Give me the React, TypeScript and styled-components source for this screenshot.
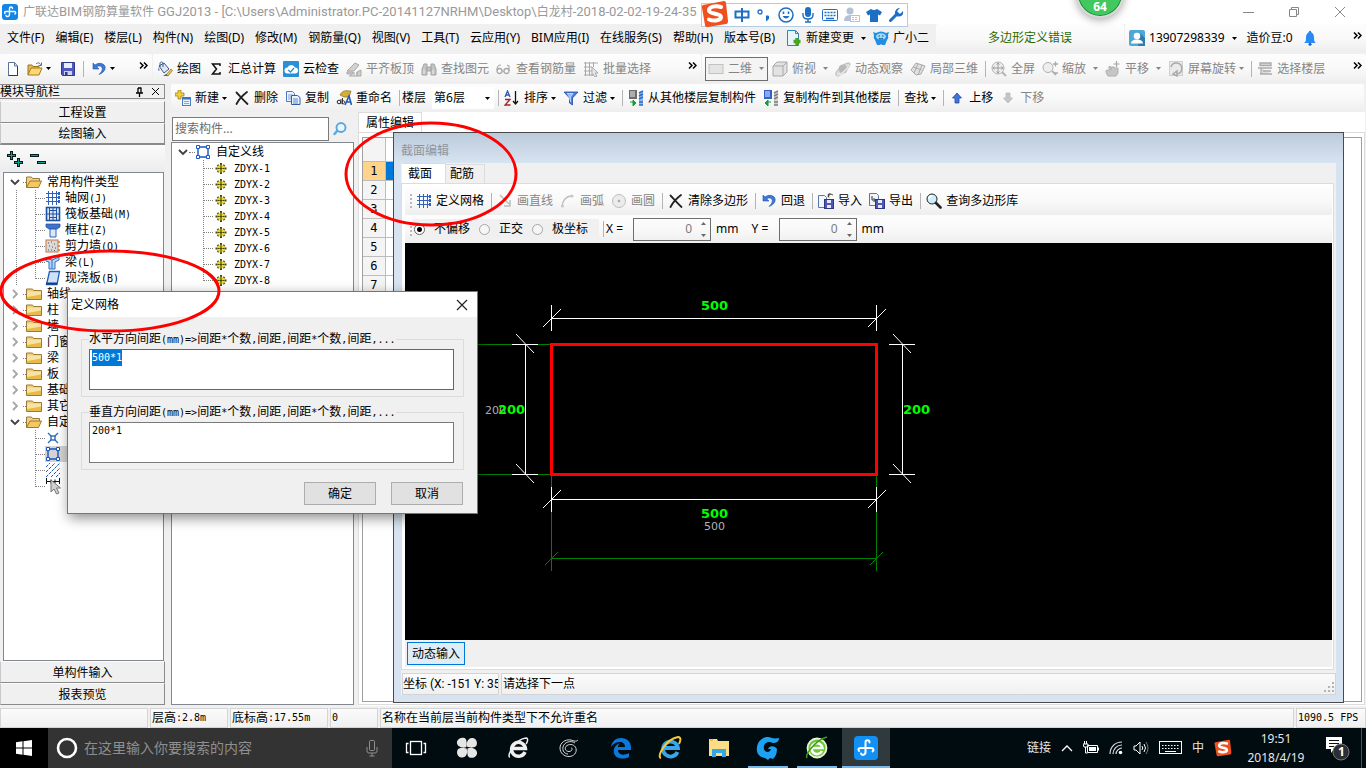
import React, { useEffect, useRef } from 'react';
import styled, { createGlobalStyle, css } from 'styled-components';

const UI = '"Noto Sans", "Noto Sans CJK SC", sans-serif';
const MONO = '"DejaVu Sans Mono", "Noto Sans CJK SC", monospace';
const NARROW = 'Roboto, "Noto Sans CJK SC", sans-serif';

const GlobalStyle = createGlobalStyle`
  * { box-sizing: border-box; }
  body { margin: 0; background: #f0f0f0; color: #000; font: 12px/16px ${UI}; }
  button, input, select, textarea { font: inherit; color: inherit; margin: 0; }
  ul { list-style: none; margin: 0; padding: 0; }
`;

/* ---------- shared ---------- */

const Screen = styled.div`
  position: relative;
  min-height: 100vh;
  display: flex;
  flex-direction: column;
  overflow: hidden;
`;

const Latin = styled.span`
  font-family: ${MONO};
  font-size: 10px;
`;

/* Half-width runs are set in the narrow monospaced face, as in the song-style labels. */
const Song = ({ children }: { children: string }) => (
  <>
    {children.split(/([\x20-\x7e]+)/).filter(Boolean).map((run, i) =>
      /^[\x20-\x7e]/.test(run) ? <Latin key={i}>{run}</Latin> : run,
    )}
  </>
);

const barFill = css`
  background: linear-gradient(#fdfdfd, #f9f9f9 50%, #eeeeee);
  border-radius: 2px;
`;

const Svg = ({ children, w = 16, h = 16 }: { children: React.ReactNode; w?: number; h?: number }) => (
  <svg width={w} height={h} viewBox={`0 0 ${w} ${h}`} fill="none" aria-hidden="true">
    {children}
  </svg>
);

const Caret = () => (
  <Svg w={5} h={3}>
    <path d="M0 0h5L2.500 3z" fill="currentColor" />
  </Svg>
);

const More = styled.span`
  margin-left: auto;
  align-self: flex-start;
  padding: 3px 4px 0 0;
`;
const MoreMark = () => (
  <More>
    <Svg w={9} h={7}>
      <path d="M1 .5l3 3-3 3M5 .5l3 3-3 3" stroke="#000" strokeWidth="1.500" />
    </Svg>
  </More>
);

const Tool = styled.button<{ $off?: boolean; $boxed?: boolean }>`
  display: flex;
  align-items: center;
  gap: 4px;
  height: 24px;
  padding: 0 3px 0 4px;
  border: 0;
  background: none;
  white-space: nowrap;
  color: ${(p) => (p.$off ? '#858585' : '#000')};
  svg { flex: none; display: block; }
  ${(p) => p.$boxed && css`
    margin-left: 3px;
    padding: 0 3px 0 2px;
    border: 1px solid #6e6e6e;
    background: #f4f4f4;
  `}
`;
const CaretSlot = styled.span<{ $wide?: boolean }>`
  width: ${(p) => (p.$wide ? 12 : 8)}px;
  margin-left: -4px;
  display: flex;
  justify-content: flex-end;
`;
const Sep = styled.span`
  width: 1px;
  height: 16px;
  margin: 0 1px 0 4px;
  background: #b4b4b4;
`;

type BtnProps = { icon?: React.ReactNode; label: string; off?: boolean; drop?: 'near' | 'wide'; boxed?: boolean };
const ToolButton = ({ icon, label, off, drop, boxed }: BtnProps) => (
  <Tool $off={off} $boxed={boxed}>
    {icon}
    {label}
    {drop && <CaretSlot $wide={drop === 'wide'}><Caret /></CaretSlot>}
  </Tool>
);

/* ---------- icons ---------- */

const G = '#a9a9a9';
const I = {
  app: (
    <Svg>
      <rect width="16" height="16" rx="3" fill="#1286e8" />
      <path d="M10.500 4.500c0-2-3-2-3 0v6c0 2.500-3 2.500-3.500 1M3 9.500C2 8 3 7.500 4 7.500h8c2 0 2 1.500 1 2.500" stroke="#fff" strokeWidth="1.400" strokeLinecap="round" />
    </Svg>
  ),
  file: <Svg><path d="M3.500 1.500h6l3 3.500v9.500h-9z" fill="#fdfeff" stroke="#5b7493" /><path d="M9.500 1.500V5h3" stroke="#5b7493" /><path d="M12.500 5.500v9h-9" stroke="#243c5c" /></Svg>,
  open: <Svg><path d="M1 14V4h4l1 1.500h6V7" fill="#e8bb57" stroke="#9b7420" /><path d="M1 14L4 7h11l-3 7z" fill="#ffd872" stroke="#a87b1e" /><path d="M9 3c2-2 4-1 5 1M14.500 1.500v3h-3" stroke="#54719b" /></Svg>,
  save: <Svg><path d="M1.500 1.500h13v13h-12l-1-1z" fill="#4f57c0" stroke="#30378e" /><path d="M4 2h8v5H4z" fill="#e9eefb" /><path d="M4 10h8v4H4z" fill="#cfd3e4" /><path d="M5 11h2.500v3H5z" fill="#30378e" /></Svg>,
  undo: <Svg><path d="M2 2v6h6L5.800 6c2-2 5.500-1 5.500 1.800 0 2-1.300 3.700-3.300 5.700 4-1.500 6.200-4 6.200-6.800C14.200 2.500 8 .8 4 4z" fill="#3f78d8" stroke="#2355ad" strokeWidth=".6" /></Svg>,
  paint: <Svg><path d="M2 5l5-3 5 6-5 4z" fill="#dfe7f2" stroke="#3c5a86" /><path d="M3 6V2.500C3 .5 6 .5 6 2.500V6" stroke="#3c5a86" /><path d="M2 6l-1 3 1.500 1z" fill="#2d67c6" /><path d="M9 14l5-6 1.500 1.500L11 15z" fill="#eec34e" stroke="#8a6a1c" strokeWidth=".7" /><path d="M6 15l3-2 2 2z" fill="#2d67c6" /></Svg>,
  sigma: <Svg><path d="M12 5V3H4.500l4 5-4 5H12v-2" stroke="#111" strokeWidth="1.500" /></Svg>,
  cloud: <Svg><rect width="16" height="16" rx="1" fill="#2a8fd3" /><path d="M4.500 12.500a3 3 0 0 1 0-6 4 4 0 0 1 7.500 0 3 3 0 0 1 0 6z" fill="#fff" /><path d="M5 9l2.500 2L11 7" stroke="#2a8fd3" strokeWidth="1.300" /></Svg>,
  slab: <Svg><path d="M1 10l8-8 4 2-5 6z" fill="#d2d2d2" stroke={G} /><path d="M1 11h6v2H1zM3 15h12V9l-4 2v4" fill="#cfcfcf" stroke={G} /><path d="M5 15v-2M8 15v-4M11 15v-4" stroke={G} /></Svg>,
  bino: <Svg><path d="M1 14V8l2-5h3v11zM10 14V3h3l2 5v6zM6 6h4v4H6z" fill="#c4c4c4" stroke="#a5a5a5" /><path d="M3 9v4M12 9v4" stroke="#eee" /></Svg>,
  glasses: <Svg><circle cx="3.500" cy="10" r="2.500" stroke={G} strokeWidth="1.300" /><circle cx="10.500" cy="10" r="2.500" stroke={G} strokeWidth="1.300" /><path d="M6 10h2M1 9c0-4 2-5 4-5M13 10V5l-2-1" stroke={G} strokeWidth="1.200" /></Svg>,
  batch: <Svg><path d="M1 2h14M1 6h8M1 10h8M1 14h8M2.500 1v14M6.500 1v14M10.500 1v5" stroke={G} /><path d="M9 6l6 6h-3l2 3-2 1-2-3-1 2z" fill="#e8e8e8" stroke={G} /></Svg>,
  flat: <Svg><rect x="1" y="3.500" width="14" height="9" fill="#e4e4e4" stroke="#c2c2c2" /></Svg>,
  cube: <Svg><path d="M1 5l4-4h10v10l-4 4H1zM1 5h10v10M11 5l4-4" fill="#e2e2e2" stroke={G} /></Svg>,
  orbit: <Svg><path d="M1 14c-1-2 2-6 6-9s8-4 8-2-3 6-7 9-6 4-7 2z" fill="#dedede" stroke="#b4b4b4" /><circle cx="8" cy="8" r="4.500" fill="#b9b9b9" /><path d="M2 14c4 0 10-5 12-10" stroke="#e8e8e8" strokeWidth="1.500" /></Svg>,
  part3d: <Svg><path d="M1 9l5-7 9 3-4 8-5 1z" fill="#e2e2e2" stroke={G} /><path d="M3.500 6l8 3M8 3l-4 9M12 4l-4 10" stroke={G} /></Svg>,
  full: <Svg><circle cx="7" cy="7" r="6" fill="#eee" stroke="#b0b0b0" /><path d="M7 2v10M2 7h10M5.500 3.500L7 2l1.500 1.500M5.500 10.500L7 12l1.500-1.500M3.500 5.500L2 7l1.500 1.500M10.500 5.500L12 7l-1.500 1.500" stroke="#9c9c9c" /><path d="M11 11l4 4" stroke="#b5b5b5" strokeWidth="2" /></Svg>,
  zoom: <Svg><circle cx="6" cy="6.500" r="5" fill="#eee" stroke="#b0b0b0" /><path d="M10 10l4 4" stroke="#b5b5b5" strokeWidth="2" /><path d="M11 3h5M13.500 .5v5M12 12h4" stroke="#aaa" strokeWidth="1.300" /></Svg>,
  hand: <Svg><path d="M3 15c-2-3-3-6-1-6l2 1V5.500h2V9l1-3h2l1 1h3v5l-2 3z" fill="#c6c6c6" stroke="#b0b0b0" /><path d="M11.500 0v6M8.500 3h6" stroke="#a5a5a5" strokeWidth="1.200" /></Svg>,
  rotate: <Svg><rect x="1.500" y=".5" width="13" height="14" fill="#eaeaea" stroke="#d0d0d0" /><path d="M3 6a5.500 5.500 0 1 1 6 7M9 10v5l-4-2z" stroke="#a9a9a9" strokeWidth="1.500" /></Svg>,
  floors: <Svg><path d="M3 2h11v2.500H3zM1 7h14M4 7v6h11M6 10h8M3 13h12" fill="#ddd" stroke="#aaa" strokeWidth="1.300" /></Svg>,
  newItem: <Svg><path d="M3 0h3v3h3v3H6v3H3V6H0V3h3z" fill="#f2cf3d" stroke="#96750f" strokeWidth=".7" /><rect x="7.500" y="7.500" width="8" height="8" fill="#eaf2fc" stroke="#4b7dc4" /><path d="M8 8.500h7" stroke="#3a70c4" strokeWidth="2" /><path d="M9 11.500h5M9 13.500h5" stroke="#88a9d8" /></Svg>,
  cross: <Svg><path d="M2.500 2.500c3 3 6 7 11 11.500M13 2C9 5 5 9 2.500 14" stroke="#222" strokeWidth="1.800" strokeLinecap="round" /></Svg>,
  copy: <Svg><path d="M1.500 1.500h6l2 2v8h-8z" fill="#edf3fc" stroke="#4d7bbd" /><path d="M3 5h5M3 7h5M3 9h5" stroke="#7fa3d8" /><path d="M6.500 5.500h6l2.500 2v7H6.500z" fill="#edf3fc" stroke="#2f5ea6" /><path d="M8 9h5M8 11h5M8 13h5" stroke="#5a87c9" /></Svg>,
  rename: <Svg><path d="M4 5c3-6 8-4 11-4l-2 6H8z" fill="#d9ad32" stroke="#8a6a1c" strokeWidth=".7" /><circle cx="3" cy="12" r="1.800" stroke="#222" /><path d="M5 9v5M6.500 8v6M6.500 11c3-1 3 3 0 3" stroke="#222" strokeWidth=".9" /><path d="M9 15l4-9 2.500 9M10.500 12h4" stroke="#2458b4" strokeWidth="1.600" /></Svg>,
  sort: <Svg><path d="M1 7l2.500-6L6 7M2 5h3" stroke="#2e59ae" strokeWidth="1.300" /><path d="M1 9.500h5L1 15h5.500" stroke="#a32525" strokeWidth="1.300" /><path d="M11.500 1v13M9 11l2.500 3L14 11" stroke="#111" strokeWidth="1.300" /></Svg>,
  filter: <Svg><path d="M1 2h14l-5.500 6v7l-3-2V8z" fill="#4b7fe0" stroke="#1f4ba5" strokeWidth=".8" /><path d="M4 3.500h6L7.500 7v5" fill="#9dbdf5" stroke="#bcd3fa" /></Svg>,
  fromFloor: <Svg><path d="M1 0h8v9H1z" fill="#6d6d6d" /><path d="M2 2h5M2 4h5M2 6h5" stroke="#eee" /><path d="M11 3l4-2v14h-4z" fill="#8fb7ee" /><path d="M11 3l4-2M11 6l4-2M11 9l4-2M11 12h4M11 15h4" stroke="#2f6cca" strokeWidth="1.500" /><path d="M2 12h3M5 10l3 3-3 3z" fill="#1a9b3c" stroke="#1a9b3c" /></Svg>,
  toFloor: <Svg><path d="M1 0h8v9H1z" fill="#3461c8" /><path d="M2 2h5M2 4h5M2 6h5" stroke="#e7efff" /><path d="M11 3l4-2v14h-4z" fill="#d2d2d2" /><path d="M11 3l4-2M11 6l4-2M11 9l4-2M11 12h4M11 15h4" stroke="#7e7e7e" strokeWidth="1.500" /><path d="M8 12H5M5 10l-3 3 3 3z" fill="#1a9b3c" stroke="#1a9b3c" /></Svg>,
  up: <Svg><path d="M8 3l4.500 5H10v5H6V8H3.500z" fill="#4272dc" stroke="#2149a0" strokeWidth=".8" /></Svg>,
  down: <Svg><path d="M8 13L3.500 8H6V3h4v5h2.500z" fill="#c6c6c6" stroke="#b5b5b5" strokeWidth=".8" /></Svg>,
  grid: <Svg><path d="M1 3.500h14M1 7.500h14M1 11.500h14M3.500 1v14M7.500 1v14M11.500 1v14" stroke="#2f62b8" /><path d="M14 2v3M14 6v3M14 10v3" stroke="#2f62b8" strokeWidth="2" /></Svg>,
  lineTool: <Svg><path d="M3 2l9 9M13 7v6H7" stroke="#bdbdbd" strokeWidth="1.500" /></Svg>,
  arcTool: <Svg><path d="M2 14c0-6 4-11 10-11" stroke="#bdbdbd" strokeWidth="1.300" /><circle cx="2.500" cy="13" r="1.500" fill="#c8c8c8" /><circle cx="12" cy="3" r="1.500" fill="#c8c8c8" /></Svg>,
  circleTool: <Svg><circle cx="8" cy="8" r="6.500" fill="#ececec" stroke="#bdbdbd" /><circle cx="8" cy="8" r="1.300" fill="#aaa" /></Svg>,
  importFile: <Svg><path d="M.5 2.500h6l2 2v10h-8z" fill="#f2f6fc" stroke="#5677a8" /><rect x="6.500" y="6.500" width="9" height="9" fill="#4f57b8" stroke="#2f357e" /><path d="M9 7h4v3H9zM9 12h4v3H9z" fill="#e6e9f6" /><path d="M10 4c1-3 3-3 5-2M12.500 .5L10 1.500l1 3" stroke="#333" /></Svg>,
  exportFile: <Svg><path d="M.5 .5h7l2 2v10h-9z" fill="#f2f6fc" stroke="#5677a8" /><rect x="6.500" y="6.500" width="9" height="9" fill="#4f57b8" stroke="#2f357e" /><path d="M9 7h4v3H9zM9 12h4v3H9z" fill="#e6e9f6" /><path d="M3 3v4h3M4.500 5L6.500 7l-2 2" stroke="#333" /></Svg>,
  lens: <Svg><circle cx="6" cy="6" r="5" fill="#cdeefa" stroke="#222" /><path d="M3 6q0-3 3-3" stroke="#fff" strokeWidth="1.500" /><path d="M10 10l4.500 4.500" stroke="#222" strokeWidth="2.600" strokeLinecap="round" /></Svg>,
  searchBlue: <Svg><path d="M5.500 9.500L2.500 13" stroke="#5aa7de" strokeWidth="2.400" strokeLinecap="round" /><circle cx="9" cy="6.500" r="4.500" fill="#eaf6fe" stroke="#5aa7de" strokeWidth="1.900" /></Svg>,
  changeFile: <Svg><path d="M1.500 .5h8l3 3v12h-11z" fill="#e9f5fc" stroke="#2b86bd" /><path d="M9.500 .5v3h3" stroke="#2b86bd" /><path d="M11 8v7M7.500 11.500h7" stroke="#4aa51d" strokeWidth="3.400" /></Svg>,
  robot: <Svg><path d="M0 2l3 1q5-3 10 0l3-1-1 3q1 3-1 5l-2 5h-3l-1-1-1 1H4L2 10Q0 8 1 5z" fill="#1f8fe6" /><ellipse cx="8" cy="6.500" rx="5" ry="3.200" fill="#9fd9fa" /><path d="M5.500 6h1.500M9 6h1.500M6 8.500q2 1 4 0" stroke="#114f8c" strokeWidth="1.200" /></Svg>,
  user: <Svg><rect width="16" height="16" rx="2" fill="#4fa6d8" /><path d="M9 16h7V8l-5-5z" fill="#2c7cae" /><circle cx="8" cy="6" r="3.300" fill="#fff" /><path d="M2 13.500c0-5.500 12-5.500 12 0z" fill="#fff" /></Svg>,
  bell: <Svg><path d="M2 13c2-1 2-3 2-6 0-3 2-5 4-5s4 2 4 5c0 3 0 5 2 6z" fill="#2a8af5" /><circle cx="8" cy="14.200" r="1.500" fill="#1565c6" /><circle cx="8" cy="2" r="1.200" fill="#2a8af5" /></Svg>,
  folder: <Svg><path d="M.5 3h6l1 1.500h8v9H.5z" fill="#f2cf74" stroke="#9b7b33" /><path d="M1 6h14v7H1z" fill="#e9b94e" /><path d="M1 5.500h14v3L1 11z" fill="#f9e3a2" /></Svg>,
  folderOpen: <Svg><path d="M.5 13.500V3h5l1 1.500h7V7" fill="#f0d084" stroke="#9b7b33" /><path d="M.5 13.500L4 7h11.500l-3 6.500z" fill="#f6c760" stroke="#9b7b33" /></Svg>,
  raft: <Svg><rect x="1.500" y="1.500" width="13" height="13" fill="#dce8f8" stroke="#1f52a5" strokeWidth="1.600" /><rect x="4.500" y="4.500" width="7" height="7" stroke="#1f52a5" /><path d="M2 8h12M8 2v12M4.500 2v2M11.500 2v2M4.500 12v2M11.500 12v2" stroke="#1f52a5" /></Svg>,
  column: <Svg><path d="M1 2h14v3l-3 2H4L1 5z" fill="#3c74cc" stroke="#1f4b94" strokeWidth=".7" /><path d="M5 7h6v8H5z" fill="#dbe8fb" stroke="#2f62b8" /></Svg>,
  wall: <Svg><rect x="1" y="2" width="12" height="12" fill="#d9d9d9" stroke="#c8763c" /><path d="M3 5h1M6 4h1M9 6h1M4 8h1M7 9h1M10 10h1M3 12h1M6 12h1M9 12.500h1" stroke="#555" /><path d="M13 4h2M13 8h2M13 12h2" stroke="#c8763c" strokeWidth="1.500" /></Svg>,
  beam: <Svg><path d="M1 4l6 2v9H4V8L1 7zM7 6l7-3v3l-4 2v7H7" fill="#b9d4f5" stroke="#2f72c8" /></Svg>,
  plate: <Svg><path d="M4.500 1.500h10L12 14.500H1.500z" fill="#cfe0f7" stroke="#1f5bb8" strokeWidth="1.300" /><path d="M1 13.500h11" stroke="#123f8c" strokeWidth="2" /></Svg>,
  point: <Svg><path d="M3 3l3 3M13 3l-3 3M3 13l3-3M13 13l-3-3" stroke="#2a70c0" strokeWidth="1.300" /><rect x="6" y="6" width="4" height="4" stroke="#1d5fb0" strokeWidth="1.300" /></Svg>,
  poly: <Svg><path d="M3 3h10v10H3z" stroke="#1856c0" strokeWidth="1.400" /><path d="M1.500 1.500h3v3h-3zM11.500 1.500h3v3h-3zM1.500 11.500h3v3h-3zM11.500 11.500h3v3h-3z" fill="#fff" stroke="#1856c0" /></Svg>,
  hatch: <Svg><path d="M1 5l4-4M1 10l9-9M1 15L15 1M6 15l9-9M11 15l4-4" stroke="#1856c0" strokeDasharray="3 1" /></Svg>,
  dims: <Svg><path d="M1.500 0v6M14.500 0v6M1 3.500h14M6 1.500v4M10 1.500v4" stroke="#111" /></Svg>,
  gear: <Svg w={12}><path d="M6 3v11M.5 8.500h11M2.500 5l7 7M9.500 5l-7 7" stroke="#45450a" strokeWidth="2" /><circle cx="6" cy="8.500" r="3.800" fill="#e4dc2c" /><path d="M6 5v2M6 10v2M2.500 8.500h2M7.500 8.500h2" stroke="#45450a" /><circle cx="6" cy="8.500" r="1.200" fill="#45450a" /></Svg>,
};

/* ---------- title and menu ---------- */

const TitleBar = styled.header`
  height: 24px;
  display: flex;
  align-items: center;
  gap: 5px;
  padding: 0 20px 0 2px;
  background: #fff;
  color: #999;
  white-space: nowrap;
`;
const TitleLatin = styled.span`
  font: 13px/16px ${NARROW};
`;
const WinControls = styled.div`
  margin-left: auto;
  display: flex;
  gap: 34px;
`;
const CtrlButton = styled.button`
  width: 12px;
  height: 12px;
  padding: 0;
  border: 0;
  background: none;
  svg { display: block; }
`;
const MenuBar = styled.nav`
  height: 28px;
  display: flex;
  align-items: stretch;
`;
const Menus = styled.div`
  display: flex;
  align-items: center;
  gap: 11px;
  padding: 0 7px;
`;
const MenuItem = styled.button`
  padding: 0;
  border: 0;
  background: none;
  white-space: nowrap;
`;
const MenuTools = styled.div`
  display: flex;
  align-items: center;
`;
const Notice = styled.output`
  ${barFill}
  width: 188px;
  margin-left: 4px;
  padding-top: 6px;
  text-align: center;
  color: #2d6a00;
`;
const UserBar = styled.div`
  ${barFill}
  flex: 1;
  margin-left: 1px;
  display: flex;
  align-items: center;
`;

const Toolbars = styled.div`
  display: flex;
  height: 32px;
  padding: 2px 0 1px;
  gap: 1px;
`;
const Strip = styled.div<{ $w?: number; $pad?: number }>`
  ${barFill}
  ${(p) => (p.$w ? css`width: ${p.$w}px;` : css`flex: 1;`)}
  display: flex;
  align-items: center;
  padding-left: ${(p) => p.$pad ?? 0}px;
`;
const QuickButton = styled.button`
  display: flex;
  align-items: center;
  padding: 0 3px;
  border: 0;
  background: none;
  & > svg { display: block; }
`;

/* ---------- work area ---------- */

const Work = styled.main`
  flex: 1;
  display: flex;
  gap: 6px;
  min-height: 0;
`;
const Side = styled.aside`
  width: 165px;
  flex: none;
  display: flex;
  flex-direction: column;
  padding-bottom: 1px;
`;
const SideTitle = styled.div`
  display: flex;
  align-items: center;
  height: 15px;
  margin-bottom: 2px;
  border: 1px solid #8b8b8b;
  border-left: 0;
  line-height: 13px;
  svg { display: block; margin-right: 4px; }
  & > :nth-child(2) { margin-left: auto; margin-right: 7px; }
`;
const SideButton = styled.button<{ $on?: boolean }>`
  height: 22px;
  padding: 1px 0 0;
  border: 1px solid #a0a0a0;
  border-color: #fdfdfd #8a8a8a #8a8a8a #c8c8c8;
  border-bottom-width: ${(p) => (p.$on ? 2 : 1)}px;
  background: #f0f0f0;
`;
const SideTools = styled.div`
  height: 27px;
  display: flex;
  align-items: center;
  gap: 7px;
  padding-left: 7px;
  background: linear-gradient(#fbfbfb, #ececec);
  svg { display: block; }
`;
const TreeBox = styled.div<{ $pad: number }>`
  flex: 1;
  margin-left: ${(p) => p.$pad}px;
  margin-right: 1px;
  border: 1px solid #828790;
  padding-top: 1px;
  background: #fff;
`;
const dotsV = 'repeating-linear-gradient(#808080 0 1px, transparent 1px 2px)';
const Branch = styled.ul<{ $x: number; $outer?: number }>`
  padding-left: ${(p) => p.$x}px;
  background-image: ${dotsV}${(p) => (p.$outer ? `, ${dotsV}` : '')};
  background-size: 1px calc(100% - 8px)${(p) => (p.$outer ? ', 1px 100%' : '')};
  background-position: ${(p) => p.$x}px 0${(p) => (p.$outer ? `, ${p.$outer}px 0` : '')};
  background-repeat: no-repeat;
`;
const Row = styled.div`
  display: flex;
  align-items: center;
  height: 16px;
  padding-left: 5px;
  white-space: nowrap;
  svg { display: block; flex: none; }
`;
const Leaf = styled.li`
  display: flex;
  align-items: center;
  height: 16px;
  white-space: nowrap;
  svg { display: block; flex: none; }
`;
const LeafBody = styled.span<{ $on?: boolean; $wide?: boolean }>`
  flex: 1;
  display: flex;
  align-items: center;
  gap: ${(p) => (p.$wide ? 7 : 4)}px;
  height: 16px;
  padding-left: ${(p) => (p.$wide ? 2 : 0)}px;
  background: ${(p) => (p.$on ? '#d4d4d4' : 'none')};
`;
const Dots = styled.i<{ $w: number }>`
  width: ${(p) => p.$w}px;
  flex: none;
  border-top: 1px dotted #808080;
`;
const Twist = ({ open }: { open?: boolean }) => (
  <Svg w={12} h={12}>
    <path d={open ? 'M2 4l4 4 4-4' : 'M4 2l4 4-4 4'} stroke={open ? '#404040' : '#a6a6a6'} strokeWidth="1.800" />
  </Svg>
);
const Gap = styled.i<{ $w: number }>`
  width: ${(p) => p.$w}px;
  flex: none;
`;
const Folder = ({ label, open }: { label: string; open?: boolean }) => (
  <Row>
    <Twist open={open} />
    <Gap $w={2} />
    <Dots $w={3} />
    {open ? I.folderOpen : I.folder}
    <Gap $w={5} />
    <Song>{label}</Song>
  </Row>
);
const Item = ({ icon, label, on, wide }: { icon: React.ReactNode; label?: string; on?: boolean; wide?: boolean }) => (
  <Leaf>
    <Dots $w={10} />
    <LeafBody $on={on} $wide={wide}>
      {icon}
      {label && <span><Song>{label}</Song></span>}
    </LeafBody>
  </Leaf>
);

const Right = styled.div`
  flex: 1;
  min-width: 0;
  display: flex;
  flex-direction: column;
`;
const EditTools = styled.div`
  ${barFill}
  display: flex;
  align-items: center;
  height: 28px;
  margin-right: 2px;
`;
const FloorLabel = styled.label`
  display: flex;
  align-items: center;
  gap: 6px;
  padding-left: 1px;
`;
const FloorBox = styled.span`
  display: flex;
  align-items: center;
  width: 62px;
  height: 22px;
  padding-right: 4px;
  background: #fff;
`;
const FloorSelect = styled.select`
  flex: 1;
  min-width: 0;
  height: 20px;
  padding: 0 0 0 2px;
  border: 0;
  background: none;
  appearance: none;
`;
const Panes = styled.div`
  flex: 1;
  display: flex;
  gap: 3px;
`;
const ListPane = styled.section`
  width: 184px;
  flex: none;
  display: flex;
  flex-direction: column;
  padding: 5px 0 1px;
`;
const SearchRow = styled.div`
  display: flex;
  align-items: center;
  height: 25px;
  padding: 0 0 1px 1px;
`;
const SearchInput = styled.input`
  width: 157px;
  height: 24px;
  padding: 0 2px 2px;
  border: 1px solid #7a7a7a;
  background: #fff;
  &::placeholder { color: #6d6d6d; opacity: 1; }
`;
const PropPane = styled.section`
  flex: 1;
  display: flex;
  flex-direction: column;
  margin-right: 1px;
  background: #fff;
`;
const PropTab = styled.button`
  width: 64px;
  height: 20px;
  padding: 0;
  border: 1px solid #dcdcdc;
  border-bottom: 0;
  background: #fff;
`;
const PropBody = styled.div`
  flex: 1;
  margin-bottom: 1px;
  padding: 4px 2px 2px 3px;
  border: 1px solid #dcdcdc;
  display: flex;
`;
const PropFrame = styled.div`
  flex: 1;
  border: 1px solid #a0a0a0;
`;
const PropGrid = styled.table`
  width: 90%;
  border-collapse: collapse;
  font: 12px/16px ${MONO};
  th, td { height: 19px; padding: 0; border: 0 solid #bdbdbd; border-width: 0 1px 1px 0; }
  th { width: 22px; font-weight: 400; background: #f4f4f4; }
  thead th { height: 23px; }
`;
const HotHead = styled.th`
  && { background: #ffd48a; }
`;
const HotCell = styled.td`
  background: #0078d7;
`;

/* ---------- section editor window ---------- */

const EditorWindow = styled.section`
  position: absolute;
  inset: 132px 22px 65px 393px;
  display: flex;
  flex-direction: column;
  padding: 0 7px 7px;
  border: 1px solid #4a4a4a;
  background: #d7e3f1;
`;
const EditorTitle = styled.h2`
  height: 30px;
  margin: 0 -7px;
  padding: 10px 7px 0;
  font-size: 12px;
  font-weight: 400;
  color: #8e959c;
  background: linear-gradient(#bccbdb, #d7e3f1);
`;
const Client = styled.div`
  flex: 1;
  display: flex;
  flex-direction: column;
  background: #f0f0f0;
`;
const Tabs = styled.div`
  display: flex;
  align-items: flex-end;
  height: 20px;
  padding-left: 1px;
`;
const Tab = styled.button<{ $on?: boolean }>`
  width: ${(p) => (p.$on ? 44 : 39)}px;
  height: ${(p) => (p.$on ? 21 : 19)}px;
  margin-bottom: ${(p) => (p.$on ? -1 : 0)}px;
  padding: 0 6px;
  text-align: left;
  border: 1px solid #dcdcdc;
  border-width: 1px 1px 0 0;
  background: ${(p) => (p.$on ? '#fff' : '#f0f0f0')};
  ${(p) => !p.$on && css`padding: 0 4px;`}
`;
const TabPanel = styled.div`
  flex: 1;
  display: flex;
  flex-direction: column;
  margin: 0 2px 3px 0;
  padding: 3px 1px 2px 3px;
  border: 1px solid #dcdcdc;
  background: #fff;
`;
const EditorBar = styled.div`
  ${barFill}
  height: 28px;
  display: flex;
  align-items: center;
  padding-left: 5px;
`;
const Grip = styled.i`
  width: 2px;
  height: 14px;
  background: repeating-linear-gradient(#b8b8b8 0 2px, transparent 2px 4px);
`;
const Radios = styled.div`
  display: flex;
  align-items: center;
  height: 20px;
  margin-left: 1px;
  padding: 0 11px 0 1px;
  gap: 9px;
  background: #f0f0f0;
`;
const Radio = styled.label`
  display: flex;
  align-items: center;
  gap: 9px;
`;
const RadioInput = styled.input<{ $off?: boolean }>`
  appearance: none;
  width: 11px;
  height: 11px;
  border: 1px solid ${(p) => (p.$off ? '#a6a6a6' : '#666')};
  border-radius: 50%;
  background: #f6f6f6;
  &:checked { background: radial-gradient(#000 0 2px, #fff 3px); }
`;
const Coord = styled.label<{ $first?: boolean }>`
  display: flex;
  align-items: center;
  gap: 5px;
  margin-left: ${(p) => (p.$first ? 1 : 13)}px;
`;
const CoordName = styled.span`
  width: 22px;
`;
const Spin = styled.span`
  display: flex;
  align-items: center;
  width: 78px;
  height: 23px;
  padding-right: 3px;
  border: 1px solid #6e6e6e;
  svg { display: block; }
`;
const SpinInput = styled.input`
  flex: 1;
  min-width: 0;
  height: 19px;
  padding: 0 8px 2px;
  border: 0;
  background: none;
  text-align: right;
  color: #7c7c7c;
`;
const Canvas = styled.div`
  flex: 1;
  background: #000;
  overflow: hidden;
  svg { display: block; }
`;
const CanvasFoot = styled.div`
  height: 27px;
  padding: 2px;
  background: #f0f0f0;
`;
const DynButton = styled.button`
  display: block;
  width: 58px;
  height: 23px;
  padding: 0;
  border: 1px solid #0078d7;
  background: #dfedf8;
`;
const EditorStatus = styled.footer`
  display: flex;
  gap: 2px;
  height: 22px;
  padding-left: 1px;
`;
const StatusCell = styled.span<{ $w?: number; $narrow?: boolean }>`
  ${(p) => (p.$w ? css`width: ${p.$w}px; flex: none;` : css`flex: 1;`)}
  ${(p) => p.$narrow && css`font-family: ${NARROW};`}
  display: flex;
  align-items: center;
  padding-left: ${(p) => (p.$narrow ? 0 : 1)}px;
  overflow: hidden;
  white-space: pre;
  border: 1px solid #d4d4d4;
  background: linear-gradient(#fbfbfb, #f0f0f0);
  & > svg { margin: auto 1px 1px auto; }
`;

const Drawing = () => {
  const slash = (x: number, y: number) => <path key={`${x}-${y}`} d={`M${x - 8} ${y + 9}l18-18`} />;
  const back = (x: number, y: number) => <path key={`${x}-${y}`} d={`M${x - 9} ${y - 10}l18 19`} />;
  const big = { fill: '#00ff00', fontFamily: 'DejaVu Sans, sans-serif', fontWeight: 700, fontSize: 13 };
  const small = { fill: '#b4b4b4', fontFamily: 'DejaVu Sans, sans-serif', fontSize: 11 };
  return (
    <svg width="100%" height="396" fill="none" role="img" aria-label="500 × 200">
      <g stroke="#008000">
        <path d="M40 101.500h107M40 231.500h107M146.500 232v96M471.500 232v96M146.500 315.500h325" />
        <path d="M140 322l13-13M465 322l13-13" />
      </g>
      <text x="80" y="171" {...small}>200</text>
      <text x="299" y="287" {...small}>500</text>
      <g stroke="#fff">
        <path d="M146.500 75.500h325M146.500 62v26M471.500 62v26" />
        <path d="M146.500 256.500h325M146.500 244v25M471.500 244v25" />
        <path d="M120.500 101.500v130M107 101.500h26M107 231.500h26" />
        <path d="M497.500 101.500v130M484 101.500h26M484 231.500h26" />
        {slash(146, 75)}{slash(471, 75)}{slash(146, 256)}{slash(471, 256)}
        {back(120, 101)}{back(120, 231)}{back(497, 101)}{back(497, 231)}
      </g>
      <rect x="146.500" y="101.500" width="325" height="130" stroke="#ff0000" strokeWidth="3" />
      <text x="296" y="67" {...big}>500</text>
      <text x="296" y="275" {...big}>500</text>
      <text x="93" y="171" {...big}>200</text>
      <text x="498" y="171" {...big}>200</text>
    </svg>
  );
};

const CoordField = ({ name, first }: { name: string; first?: boolean }) => (
  <Coord $first={first}>
    <CoordName>{name} =</CoordName>
    <Spin>
      <SpinInput defaultValue="0" />
      <Svg w={7} h={17}><path d="M1 4l2.500-3L6 4zM1 13l2.500 3L6 13z" fill="#6a6a6a" /></Svg>
    </Spin>
    mm
  </Coord>
);

const SectionEditor = () => (
  <EditorWindow>
    <EditorTitle>截面编辑</EditorTitle>
    <Client>
      <Tabs>
        <Tab $on>截面</Tab>
        <Tab>配筋</Tab>
      </Tabs>
      <TabPanel>
        <EditorBar>
          <Grip />
          <ToolButton icon={I.grid} label="定义网格" />
          <Sep />
          <ToolButton icon={I.lineTool} label="画直线" off />
          <ToolButton icon={I.arcTool} label="画弧" off />
          <ToolButton icon={I.circleTool} label="画圆" off />
          <Sep />
          <ToolButton icon={I.cross} label="清除多边形" />
          <Sep />
          <ToolButton icon={I.undo} label="回退" />
          <Sep />
          <ToolButton icon={I.importFile} label="导入" />
          <ToolButton icon={I.exportFile} label="导出" />
          <Sep />
          <ToolButton icon={I.lens} label="查询多边形库" />
        </EditorBar>
        <EditorBar>
          <Grip />
          <Radios>
            <Radio><RadioInput type="radio" name="mode" defaultChecked />不偏移</Radio>
            <Radio><RadioInput type="radio" name="mode" $off />正交</Radio>
            <Radio><RadioInput type="radio" name="mode" $off />极坐标</Radio>
          </Radios>
          <Sep />
          <CoordField name="X" first />
          <CoordField name="Y" />
        </EditorBar>
        <Canvas><Drawing /></Canvas>
        <CanvasFoot><DynButton>动态输入</DynButton></CanvasFoot>
      </TabPanel>
      <EditorStatus>
        <StatusCell $w={97} $narrow>坐标 (X: -151 Y: 35</StatusCell>
        <StatusCell>
          请选择下一点
          <Svg w={11} h={11}>
            <path d="M9 0h2v2H9zM9 4h2v2H9zM9 8h2v2H9zM5 4h2v2H5zM5 8h2v2H5zM1 8h2v2H1z" fill="#b4b4b4" />
          </Svg>
        </StatusCell>
      </EditorStatus>
    </Client>
  </EditorWindow>
);

/* ---------- grid dialog ---------- */

const Dialog = styled.section`
  position: absolute;
  left: 67px;
  top: 291px;
  width: 411px;
  border: 1px solid #2f86dd;
  background: #f0f0f0;
  box-shadow: 2px 4px 12px rgba(0, 0, 0, 0.45);
`;
const DialogTitle = styled.header`
  display: flex;
  align-items: center;
  justify-content: space-between;
  height: 25px;
  padding: 0 9px 0 3px;
  background: #fff;
`;
const DialogBody = styled.form`
  display: flex;
  flex-direction: column;
  gap: 7px;
  padding: 14px 13px 8px;
`;
const Field = styled.fieldset`
  height: 66px;
  margin: 0;
  padding: 1px 9px 0 7px;
  border: 1px solid #dcdcdc;
`;
const Legend = styled.legend`
  padding: 0 1px 0 0;
  white-space: nowrap;
`;
const Entry = styled.textarea<{ $focus?: boolean }>`
  display: block;
  width: 100%;
  height: 41px;
  padding: 0 2px;
  border: 1px solid ${(p) => (p.$focus ? '#3c6f9c' : '#7a7a7a')};
  outline: 0;
  resize: none;
  overflow: hidden;
  font: 10px/16px ${MONO};
  background: #fff;
  caret-color: transparent;
  &::selection { background: #0078d7; color: #fff; }
`;
const Actions = styled.div`
  display: flex;
  justify-content: flex-end;
  gap: 15px;
  padding: 5px 1px 0 0;
`;
const PushButton = styled.button`
  width: 72px;
  height: 23px;
  padding: 0;
  border: 1px solid #adadad;
  background: #e1e1e1;
`;

const GridDialog = () => {
  const first = useRef<HTMLTextAreaElement>(null);
  useEffect(() => {
    first.current?.focus({ preventScroll: true });
    first.current?.select();
  }, []);
  return (
    <Dialog role="dialog" aria-labelledby="grid-title">
      <DialogTitle>
        <span id="grid-title">定义网格</span>
        <CtrlButton aria-label="关闭">
          <Svg w={12} h={12}><path d="M1 1l10 10M11 1L1 11" stroke="#222" strokeWidth="1.200" /></Svg>
        </CtrlButton>
      </DialogTitle>
      <DialogBody onSubmit={(e) => e.preventDefault()}>
        <Field>
          <Legend id="h-gap"><Song>水平方向间距(mm)=&gt;间距*个数,间距,间距*个数,间距,...</Song></Legend>
          <Entry ref={first} $focus aria-labelledby="h-gap" defaultValue="500*1" spellCheck={false} />
        </Field>
        <Field>
          <Legend id="v-gap"><Song>垂直方向间距(mm)=&gt;间距*个数,间距,间距*个数,间距,...</Song></Legend>
          <Entry aria-labelledby="v-gap" defaultValue="200*1" spellCheck={false} />
        </Field>
        <Actions>
          <PushButton type="submit">确定</PushButton>
          <PushButton type="button">取消</PushButton>
        </Actions>
      </DialogBody>
    </Dialog>
  );
};

/* ---------- floating items ---------- */

const Marks = styled.svg`
  position: absolute;
  left: 0;
  top: 0;
  pointer-events: none;
`;
const InputBar = styled.div`
  position: absolute;
  left: 701px;
  top: 3px;
  width: 207px;
  height: 24px;
  display: flex;
  align-items: center;
  gap: 6px;
  padding-left: 32px;
  border: 1px solid #b4cbe4;
  background: #fff;
  color: #1c6fc4;
  font-weight: 700;
  svg { display: block; }
`;
const InputLogo = styled.span`
  position: absolute;
  left: -1px;
  top: -4px;
`;
const Ball = styled.div`
  position: absolute;
  left: 1076px;
  top: -30px;
  width: 48px;
  height: 48px;
  padding-top: 27px;
  border: 2px solid #d8d8d8;
  border-radius: 50%;
  background: #43c75f;
  box-shadow: inset 0 0 0 1px #168a3a, 0 2px 8px rgba(0, 0, 0, 0.35);
  color: #fff;
  font: 700 12px/16px ${UI};
  text-align: center;
`;
const SogouS = ({ size }: { size: number }) => (
  <svg width={size} height={size} viewBox="0 0 28 28" aria-hidden="true">
    <path d="M2 5L23 1q2 0 2 2l2 18q0 3-2 3L7 27q-3 0-3-2L1 8Q0 6 2 5z" fill="#f0501e" />
    <path d="M20 7C14 5 8 7 8 10.500c0 4 12 2.500 12 6.500 0 3.500-7 4.500-12 2.500" fill="none" stroke="#fff" strokeWidth="4" strokeLinecap="round" />
  </svg>
);

/* ---------- status and taskbar ---------- */

const StatusBar = styled.footer`
  display: flex;
  gap: 2px;
  height: 20px;
  margin-top: 2px;
`;
const Taskbar = styled.footer`
  display: flex;
  height: 40px;
  background: #010c10;
  color: #e6e6e6;
  svg { display: block; }
`;
const StartButton = styled.button`
  width: 48px;
  display: grid;
  place-items: center;
  padding: 0;
  border: 0;
  background: #000;
`;
const TaskSearch = styled.label`
  width: 344px;
  display: flex;
  align-items: center;
  gap: 6px;
  padding: 0 14px 0 8px;
  background: #333;
`;
const TaskInput = styled.input`
  flex: 1;
  min-width: 0;
  padding: 0;
  border: 0;
  background: none;
  font-size: 14px;
  line-height: 20px;
  &::placeholder { color: #8f8f8f; opacity: 1; }
`;
const TaskGroup = styled.div<{ $gap: number }>`
  display: flex;
  gap: ${(p) => p.$gap}px;
  margin-right: 4px;
`;
const TaskButton = styled.button<{ $state?: 'open' | 'active' }>`
  width: 48px;
  display: grid;
  place-items: center;
  padding: 0;
  border: 0;
  background: ${(p) => (p.$state === 'active' ? '#30393c' : 'none')};
  box-shadow: ${(p) => (p.$state ? 'inset 0 -2px #76b9ed' : 'none')};
  ${(p) => p.$state === 'open' && css`width: 40px; margin: 0 4px;`}
`;
const Tray = styled.div`
  margin-left: auto;
  display: flex;
  align-items: center;
  gap: 10px;
  white-space: nowrap;
`;
const Clock = styled.time`
  width: 68px;
  text-align: center;
  line-height: 19px;
  margin-right: 5px;
`;
const Notices = styled.button`
  width: 37px;
  height: 40px;
  padding: 0;
  border: 0;
  border-right: 1px solid #4a5053;
  margin-right: 4px;
  background: none;
`;

const T = {
  start: <Svg><path d="M0 2.200l6.500-.9v6.200H0zM7.500 1.200L16 0v7.500H7.500zM0 8.500h6.500v6.200L0 13.800zM7.500 8.500H16V16l-8.500-1.200z" fill="#fff" /></Svg>,
  ring: <Svg w={22} h={22}><circle cx="11" cy="11" r="9" stroke="#fff" strokeWidth="2.600" /></Svg>,
  mic: <Svg w={12} h={18}><rect x="3.500" y="1.500" width="5" height="10" rx="1" stroke="#8f8f8f" /><path d="M1 8v4q0 2 2 2h6q2 0 2-2V8M6 14v3M3.500 17h5" stroke="#8f8f8f" /></Svg>,
  view: <Svg w={22} h={16}><rect x="5.500" y="1.500" width="11" height="13" stroke="#fff" strokeWidth="1.300" /><path d="M3.500 3.500h-2v9h2M18.500 3.500h2v9h-2" stroke="#fff" strokeWidth="1.300" /></Svg>,
  flower: <Svg w={22} h={22}><g fill="#e6e6e6"><path d="M10.500 10C6 12 0 9 1 4.500 2 1 6 0 8.500 1c2 1 2.500 3 2 9zM11.500 10C9.500 6 12 0 17 1c4 1 4.500 5 3.500 7.500-1 2-4 2.500-9 1.500zM11.500 11.500c4.500-2 10.500 1 9.500 5.500-1 3.500-5 4.500-7.500 3.500-2-1-2.500-3-2-9zM10.500 11.500c2 4-.5 10-5.500 9-4-1-4.500-5-3.500-7.500 1-2 4-2.500 9-1.500z" /></g></Svg>,
  ieWhite: <Svg w={22} h={22}><path d="M18 15a7 7 0 1 1 .5-3.500H6" stroke="#f0f0f0" strokeWidth="3.400" /><path d="M3 20C-1 20 8 2 19 1c3 0 1 5 0 6" stroke="#f0f0f0" strokeWidth="1.500" /></Svg>,
  swirl: <Svg w={20} h={20}><path d="M19 2c-2 2-4 1-7 0C6 1 1 5 1 10c0 5 4 8.500 9 8.500s8-4 7-8-6-5-9-3-2 6 2 6c3 0 4-3 2-4M16 5C12 2 5 4 4 9c-1 4 2 7 5 7" stroke="#dadada" /></Svg>,
  edge: <Svg w={22} h={22}><path d="M1 10C2 4 6 1 11 1c6 0 10 4 10 9v3H8c0 5 6 6 11 3v4c-8 4-17 0-15-8 1-3 3-5 6-6-2 2-2 3-2 4h7c0-7-10-6-14 0z" fill="#0a78dc" /></Svg>,
  ie: <Svg w={24} h={24}><path d="M19.500 16a7.500 7.500 0 1 1 .5-4H7" stroke="#3aa6ea" strokeWidth="3.800" /><path d="M3 22C-2 21 8 3 20 1c4 0 2 5 1 7" stroke="#f7c832" strokeWidth="2" /></Svg>,
  explorer: <Svg w={22} h={20}><path d="M1 1h8l1 2h11v15H1z" fill="#fbdd86" /><path d="M4 19v-8h14v8h-4v-4H8v4z" fill="#35a7e2" /><path d="M2 2h3" stroke="#e99a1c" /></Svg>,
  gBlue: <Svg w={24} h={24}><path d="M23 2c0 4-3 5-6 5-6-3-10 1-9 6 1 4 6 4 7 0h-3c2-4 7-3 9 0 0 5-2 8-4 10l-3-1-2 2-3-2C3 21 0 17 1 11 2 4 9-1 16 2c3 1 5 0 7 0z" fill="#1da1f2" /></Svg>,
  green: <Svg w={24} h={24}><circle cx="12" cy="12" r="9.500" fill="#6cc832" stroke="#e8f6dd" strokeWidth="1.800" /><path d="M17 15a5.500 5.500 0 1 1 .5-3H8" stroke="#fff" strokeWidth="2.600" /><path d="M2 22C0 19 10 4 22 1" stroke="#3f9a14" strokeWidth="1.500" /></Svg>,
  ggj: <Svg w={24} h={24}><rect width="24" height="24" rx="4" fill="#1390f5" /><path d="M15.500 6.500c0-3-4-3-4 0V16c0 3.500-4 3.500-4.500 1.500M5 15c-1.500-2 0-3 2-3h10c3 0 3 2.500 1.500 3.500" stroke="#fff" strokeWidth="2" strokeLinecap="round" /></Svg>,
};

const folders = ['轴线', '柱', '墙', '门窗', '梁', '板', '基础', '其它'];

export default function App() {
  return (
    <Screen>
      <GlobalStyle />
      <TitleBar>
        {I.app}
        <span>
          广联达<TitleLatin>BIM</TitleLatin>钢筋算量软件
          <TitleLatin> GGJ2013 - [C:\Users\Administrator.PC-20141127NRHM\Desktop\</TitleLatin>
          白龙村<TitleLatin>-2018-02-02-19-24-35</TitleLatin>
        </span>
        <WinControls>
          <CtrlButton aria-label="最小化"><Svg w={12} h={12}><path d="M1 6.500h11" stroke="#888" /></Svg></CtrlButton>
          <CtrlButton aria-label="还原"><Svg w={12} h={12}><path d="M1.500 3.500h7v7h-7zM3.500 3.500v-2h7v7h-2" stroke="#888" /></Svg></CtrlButton>
          <CtrlButton aria-label="关闭"><Svg w={12} h={12}><path d="M1 1l10 10M11 1L1 11" stroke="#888" /></Svg></CtrlButton>
        </WinControls>
      </TitleBar>

      <MenuBar>
        <Menus>
          {['文件(F)', '编辑(E)', '楼层(L)', '构件(N)', '绘图(D)', '修改(M)', '钢筋量(Q)', '视图(V)', '工具(T)', '云应用(Y)', 'BIM应用(I)', '在线服务(S)', '帮助(H)', '版本号(B)'].map((m) => (
            <MenuItem key={m}>{m}</MenuItem>
          ))}
        </Menus>
        <MenuTools>
          <ToolButton icon={I.changeFile} label="新建变更" drop="wide" />
          <ToolButton icon={I.robot} label="广小二" />
        </MenuTools>
        <Notice>多边形定义错误</Notice>
        <UserBar>
          <ToolButton icon={I.user} label="13907298339" drop="wide" />
          <Gap $w={3} />
          <ToolButton label="造价豆:0" />
          <Gap $w={3} />
          <QuickButton aria-label="消息">{I.bell}</QuickButton>
          <MoreMark />
        </UserBar>
      </MenuBar>

      <Toolbars>
        <Strip $w={152} $pad={2}>
          <QuickButton aria-label="新建">{I.file}</QuickButton>
          <QuickButton aria-label="打开">{I.open}<CaretSlot $wide><Caret /></CaretSlot></QuickButton>
          <Gap $w={3} />
          <QuickButton aria-label="保存">{I.save}</QuickButton>
          <Sep />
          <Gap $w={3} />
          <QuickButton aria-label="撤销">{I.undo}<CaretSlot $wide><Caret /></CaretSlot></QuickButton>
          <MoreMark />
        </Strip>
        <Strip $w={548}>
          <ToolButton icon={I.paint} label="绘图" />
          <ToolButton icon={I.sigma} label="汇总计算" />
          <ToolButton icon={I.cloud} label="云检查" />
          <ToolButton icon={I.slab} label="平齐板顶" off />
          <ToolButton icon={I.bino} label="查找图元" off />
          <ToolButton icon={I.glasses} label="查看钢筋量" off />
          <ToolButton icon={I.batch} label="批量选择" off />
          <MoreMark />
        </Strip>
        <Strip>
          <ToolButton icon={I.flat} label="二维" off drop="wide" boxed />
          <ToolButton icon={I.cube} label="俯视" off drop="wide" />
          <ToolButton icon={I.orbit} label="动态观察" off />
          <ToolButton icon={I.part3d} label="局部三维" off />
          <Sep />
          <ToolButton icon={I.full} label="全屏" off />
          <ToolButton icon={I.zoom} label="缩放" off drop="wide" />
          <ToolButton icon={I.hand} label="平移" off drop="wide" />
          <ToolButton icon={I.rotate} label="屏幕旋转" off drop="near" />
          <Sep />
          <ToolButton icon={I.floors} label="选择楼层" off />
          <MoreMark />
        </Strip>
      </Toolbars>

      <Work>
        <Side>
          <SideTitle>
            <span>模块导航栏</span>
            <Svg w={9} h={10}><path d="M3 1h3.500M3 1v5M6 1v5M1 6h7M4.500 6v4" stroke="#000" strokeWidth="1.300" /></Svg>
            <Svg w={9} h={9}><path d="M1 1l7 7M8 1L1 8" stroke="#000" /></Svg>
          </SideTitle>
          <SideButton>工程设置</SideButton>
          <SideButton $on>绘图输入</SideButton>
          <SideTools>
            <Svg><path d="M4.500 0v9M0 4.500h9" stroke="#001d1d" strokeWidth="3" /><path d="M11.500 7v9M7 11.500h9" stroke="#001d1d" strokeWidth="3" /><path d="M4.500 1v7M1 4.500h7M11.500 8v7M8 11.500h7" stroke="#12a08c" /></Svg>
            <Svg><path d="M0 4.500h9M7 11.500h9" stroke="#001d1d" strokeWidth="3" /><path d="M1 4.500h7M8 11.500h7" stroke="#12a08c" /></Svg>
          </SideTools>
          <TreeBox $pad={3}>
            <Folder label="常用构件类型" open />
            <Branch $x={31} $outer={12}>
              <Item icon={I.grid} label="轴网(J)" />
              <Item icon={I.raft} label="筏板基础(M)" />
              <Item icon={I.column} label="框柱(Z)" />
              <Item icon={I.wall} label="剪力墙(Q)" />
              <Item icon={I.beam} label="梁(L)" />
              <Item icon={I.plate} label="现浇板(B)" />
            </Branch>
            {folders.map((f) => <Folder key={f} label={f} />)}
            <Folder label="自定义" open />
            <Branch $x={31}>
              <Item icon={I.point} />
              <Item icon={I.poly} on />
              <Item icon={I.hatch} />
              <Item icon={I.dims} />
            </Branch>
          </TreeBox>
          <SideButton>单构件输入</SideButton>
          <SideButton>报表预览</SideButton>
        </Side>

        <Right>
          <EditTools>
            <ToolButton icon={I.newItem} label="新建" drop="near" />
            <ToolButton icon={I.cross} label="删除" />
            <ToolButton icon={I.copy} label="复制" />
            <ToolButton icon={I.rename} label="重命名" />
            <Sep />
            <FloorLabel>
              楼层
              <FloorBox>
                <FloorSelect defaultValue="6"><option value="6">第6层</option></FloorSelect>
                <Caret />
              </FloorBox>
            </FloorLabel>
            <Sep />
            <ToolButton icon={I.sort} label="排序" drop="near" />
            <ToolButton icon={I.filter} label="过滤" drop="near" />
            <Sep />
            <ToolButton icon={I.fromFloor} label="从其他楼层复制构件" />
            <ToolButton icon={I.toFloor} label="复制构件到其他楼层" />
            <Sep />
            <ToolButton label="查找" drop="near" />
            <Sep />
            <ToolButton icon={I.up} label="上移" />
            <ToolButton icon={I.down} label="下移" off />
          </EditTools>
          <Panes>
            <ListPane>
              <SearchRow>
                <SearchInput placeholder="搜索构件..." aria-label="搜索构件" />
                <QuickButton aria-label="搜索">{I.searchBlue}</QuickButton>
              </SearchRow>
              <TreeBox $pad={0}>
                <Row>
                  <Twist open />
                  <Dots $w={6} />
                  {I.poly}
                  <Gap $w={5} />
                  自定义线
                </Row>
                <Branch $x={31}>
                  {[1, 2, 3, 4, 5, 6, 7, 8].map((n) => <Item key={n} icon={I.gear} label={`ZDYX-${n}`} wide />)}
                </Branch>
              </TreeBox>
            </ListPane>
            <PropPane>
              <PropTab>属性编辑</PropTab>
              <PropBody>
                <PropFrame>
                  <PropGrid>
                    <thead><tr><th /><td /></tr></thead>
                    <tbody>
                      <tr><HotHead>1</HotHead><HotCell /></tr>
                      {[2, 3, 4, 5, 6, 7].map((n) => <tr key={n}><th>{n}</th><td /></tr>)}
                    </tbody>
                  </PropGrid>
                </PropFrame>
              </PropBody>
            </PropPane>
          </Panes>
        </Right>
      </Work>

      <StatusBar>
        <StatusCell $w={148} />
        <StatusCell $w={78}><Song>层高:2.8m</Song></StatusCell>
        <StatusCell $w={98}><Song>底标高:17.55m</Song></StatusCell>
        <StatusCell $w={48}><Song>0</Song></StatusCell>
        <StatusCell>名称在当前层当前构件类型下不允许重名</StatusCell>
        <StatusCell $w={70}><Song>1090.5 FPS</Song></StatusCell>
      </StatusBar>

      <Taskbar>
        <StartButton aria-label="开始">{T.start}</StartButton>
        <TaskSearch>
          {T.ring}
          <TaskInput placeholder="在这里输入你要搜索的内容" />
          {T.mic}
        </TaskSearch>
        <TaskGroup $gap={3}>
          <TaskButton aria-label="任务视图">{T.view}</TaskButton>
          <TaskButton aria-label="启动器">{T.flower}</TaskButton>
          <TaskButton aria-label="浏览器">{T.ieWhite}</TaskButton>
          <TaskButton aria-label="工具">{T.swirl}</TaskButton>
        </TaskGroup>
        <TaskGroup $gap={1}>
          <TaskButton aria-label="Edge">{T.edge}</TaskButton>
          <TaskButton aria-label="Internet Explorer">{T.ie}</TaskButton>
          <TaskButton aria-label="文件资源管理器">{T.explorer}</TaskButton>
          <TaskButton aria-label="广联达" $state="open">{T.gBlue}</TaskButton>
          <TaskButton aria-label="安全浏览器" $state="open">{T.green}</TaskButton>
          <TaskButton aria-label="GGJ2013" $state="active">{T.ggj}</TaskButton>
        </TaskGroup>
        <Tray>
          <span>链接</span>
          <Svg w={12} h={8}><path d="M1 7l5-5 5 5" stroke="#fff" strokeWidth="1.300" /></Svg>
          <Svg w={16} h={14}><path d="M4.500 4.500h10v7h-10zM15.500 6.500v3" stroke="#fff" /><path d="M6 6h7v4H6z" fill="#fff" /><path d="M0 3h5v3H1zM1.500 0v3M3.500 0v3M2.500 6v6h2" stroke="#fff" /></Svg>
          <Svg w={14} h={14}><path d="M1 13C1 6 6 1 13 1M4 13c0-5 4-9 9-9M7 13c0-3 3-6 6-6" stroke="#ddd" strokeWidth="1.200" /><circle cx="11.500" cy="11.500" r="1.800" fill="#fff" /></Svg>
          <Svg w={16} h={14}><path d="M1 5h2l4-4v12L3 9H1z" stroke="#fff" /><path d="M9 5q1.500 2 0 4M11 3q3 4 0 8" stroke="#fff" /><path d="M13 1q4 6 0 12" stroke="#777" /></Svg>
          <Svg w={23} h={14}><rect x=".5" y=".5" width="22" height="12" stroke="#fff" /><path d="M3 4.500h17M3 7.500h17" stroke="#fff" strokeDasharray="1.500 1.500" /><path d="M6 10.500h11" stroke="#fff" /></Svg>
          <span>中</span>
          <SogouS size={18} />
          <Clock>19:51<br />2018/4/19</Clock>
          <Notices aria-label="通知">
            <svg width="28" height="26" viewBox="0 0 28 26" aria-hidden="true">
              <path d="M1 2h16v12h-8l-3 4v-4H1z" fill="#fff" />
              <path d="M4 5.500h10M4 8.500h10M4 11.500h5" stroke="#111" />
              <circle cx="16" cy="17" r="8" fill="#2b2f31" stroke="#777" />
              <text x="13" y="21" fill="#fff" fontSize="12" fontWeight="700" fontFamily="Noto Sans, sans-serif">1</text>
            </svg>
          </Notices>
        </Tray>
      </Taskbar>

      <SectionEditor />
      <GridDialog />

      <InputBar>
        <InputLogo><SogouS size={28} /></InputLogo>
        <Svg><path d="M1.500 4.500h13v6h-13zM8 1v14" stroke="currentColor" strokeWidth="2" /></Svg>
        <Svg><circle cx="4" cy="5" r="2" stroke="currentColor" strokeWidth="1.300" /><path d="M10 9h2.500v3L10 14" fill="currentColor" stroke="currentColor" /></Svg>
        <Svg><circle cx="8" cy="8" r="7" stroke="currentColor" strokeWidth="1.500" /><path d="M4.500 9q3.500 5 7 0z" fill="currentColor" /><path d="M5.500 4.500v2.500M10.500 4.500v2.500" stroke="currentColor" strokeWidth="1.600" /></Svg>
        <Svg><rect x="5" y="0" width="6" height="10" rx="3" fill="currentColor" /><path d="M3 6v2q0 4 5 4t5-4V6M8 12v3M5 15h6" stroke="currentColor" strokeWidth="1.400" /></Svg>
        <Svg><rect x=".5" y="2.500" width="15" height="11" rx="1" stroke="currentColor" /><path d="M2.500 5.500h11M2.500 8.500h11" stroke="currentColor" strokeWidth="1.500" strokeDasharray="2 1" /><path d="M4 11.500h8" stroke="currentColor" strokeWidth="1.500" /></Svg>
        <Svg><circle cx="6" cy="4" r="3.500" fill="#b3c2d4" /><path d="M0 14q0-6 6-6t6 6z" fill="#b3c2d4" /><rect x="6.500" y="8.500" width="9" height="6" fill="#fff" stroke="#b3c2d4" /><path d="M8 10.500h6M8 12.500h6" stroke="#b3c2d4" strokeDasharray="2 1" /></Svg>
        <Svg><path d="M5 2q3 2 6 0l5 3-2 3.500-2-1V15H4V7.500l-2 1L0 5z" fill="currentColor" /></Svg>
        <Svg><path d="M2.500 13.500l7-7" stroke="currentColor" strokeWidth="3" strokeLinecap="round" /><path d="M12 1L9.500 3.500v3h3L15 4q1 5-4 5.500T7 5q1-4 5-4z" fill="currentColor" /></Svg>
      </InputBar>
      <Ball>64</Ball>

      <Marks width="520" height="500" fill="none" aria-hidden="true">
        <ellipse cx="431" cy="174" rx="85" ry="51" stroke="#ff0000" strokeWidth="3" />
        <ellipse cx="110" cy="291" rx="109" ry="40" stroke="#ff0000" strokeWidth="3" />
        <path d="M51 480v12l3-3 2.500 5 2.500-1-2.500-5h4z" fill="#d0d0d0" stroke="#777" />
      </Marks>
    </Screen>
  );
}
